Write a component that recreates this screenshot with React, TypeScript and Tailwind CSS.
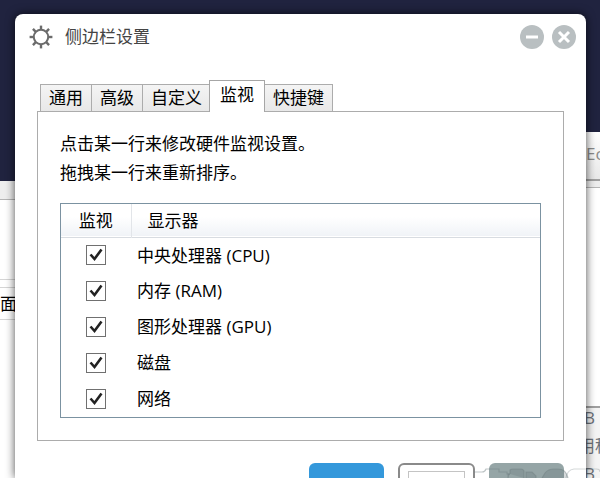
import { useState } from 'react'

const TABS = ['通用', '高级', '自定义', '监视', '快捷键']

const MONITORS = [
  { id: 'cpu', name: '中央处理器 (CPU)' },
  { id: 'ram', name: '内存 (RAM)' },
  { id: 'gpu', name: '图形处理器 (GPU)' },
  { id: 'disk', name: '磁盘' },
  { id: 'net', name: '网络' },
]

function GearIcon() {
  return (
    <svg className="w-6 h-6 shrink-0" viewBox="0 0 24 24" fill="none" stroke="#6b6b6b" strokeWidth="2">
      <circle cx="12" cy="12" r="7.2" />
      {[0, 45, 90, 135, 180, 225, 270, 315].map(a => (
        <path key={a} d="M12 0.6V5" strokeWidth="2.4" transform={`rotate(${a} 12 12)`} />
      ))}
    </svg>
  )
}

function TitleBar() {
  return (
    <header className="flex items-center justify-between h-6 mt-[11px] pl-3.5 pr-2.5">
      <div className="flex items-center gap-3">
        <GearIcon />
        <h1 className="text-[17px] leading-6 text-[#444444]">侧边栏设置</h1>
      </div>
      <div className="flex items-center gap-2">
        <button aria-label="最小化" className="w-6 h-6 rounded-full bg-[#b9bfc1]">
          <svg viewBox="0 0 24 24" stroke="#ffffff" strokeWidth="3">
            <path d="M6 12H18" />
          </svg>
        </button>
        <button aria-label="关闭" className="w-6 h-6 rounded-full bg-[#b9bfc1]">
          <svg viewBox="0 0 24 24" stroke="#ffffff" strokeWidth="3">
            <path d="M7 7L17 17M17 7L7 17" />
          </svg>
        </button>
      </div>
    </header>
  )
}

function MonitorTable() {
  const [checked, setChecked] = useState<Record<string, boolean>>({
    cpu: true, ram: true, gpu: true, disk: true, net: true,
  })

  return (
    <div className="mt-4 border border-[#7b92a1]">
      <table className="w-full table-fixed text-left">
        <thead>
          <tr className="h-[33px] bg-linear-to-b from-white from-40% to-[#f0f3f7] border-b border-[#d8dce1]">
            <th className="w-[70px] font-normal text-center border-r border-[#e2e5e9]">监视</th>
            <th className="font-normal pl-4">显示器</th>
          </tr>
        </thead>
        <tbody>
          {MONITORS.map(m => (
            <tr key={m.id} className="h-9">
              <td>
                <span className="grid place-items-center">
                  <input
                    id={m.id}
                    type="checkbox"
                    checked={checked[m.id]}
                    onChange={() => setChecked({ ...checked, [m.id]: !checked[m.id] })}
                    className="peer appearance-none col-start-1 row-start-1 w-5 h-5 border border-[#707070] bg-white"
                  />
                  <svg
                    className="col-start-1 row-start-1 w-5 h-5 pointer-events-none invisible peer-checked:visible"
                    viewBox="0 0 20 20" fill="none" stroke="#222222" strokeWidth="2.6"
                  >
                    <path d="M4.5 9.5L8.5 14L15.5 4.5" />
                  </svg>
                </span>
              </td>
              <td className="pl-1.5">
                <label htmlFor={m.id}>{m.name}</label>
              </td>
            </tr>
          ))}
        </tbody>
      </table>
    </div>
  )
}

// Faint outline logo that lies over the bottom right corner
function Watermark() {
  return (
    <svg
      className="absolute z-20 right-0 bottom-0 w-[126px] h-4 pointer-events-none"
      viewBox="0 0 126 16" fill="none" stroke="#6f7f80" strokeOpacity="0.45" strokeWidth="1.2"
    >
      <path d="M0 10H8Q11 10 12 7H25V10H33V12H36" />
      <path d="M36 12V8Q37 7 39 7H47Q49 7 50 9V16M36 12H34V16" fill="#5f7172" fillOpacity="0.25" />
      <path d="M52 16V10H58L62 14V16M68 16L71 11Q74 7 80 7H84Q92 7 94 16" fill="#5f7172" fillOpacity="0.25" />
      <path d="M92 16Q93 8 100 7H122Q126 7 126 10" strokeOpacity="0.3" />
    </svg>
  )
}

function SettingsDialog() {
  const [active, setActive] = useState('监视')

  return (
    <main className="relative z-10 flex-1 min-w-0 flex flex-col mt-3.5 rounded-t-lg bg-white shadow-[0_0_10px_rgba(0,0,0,0.7)]">
      <TitleBar />

      {/* Tabs */}
      <div role="tablist" className="relative flex items-end h-8 mt-[31px] ml-[25px]">
        {TABS.map(t => (
          <button
            key={t}
            role="tab"
            aria-selected={t === active}
            onClick={() => setActive(t)}
            className={
              t === active
                ? 'relative z-10 h-8 -mx-px px-2.5 pb-1 leading-6 bg-white border border-b-0 border-[#a6a6a6]'
                : 'h-7 px-2 -mr-px leading-6 bg-linear-to-b from-[#f4f4f4] to-[#e8e8e8] border border-[#acacac]'
            }
          >
            {t}
          </button>
        ))}
      </div>

      <section className="-mt-px mx-[22px] px-[22px] pt-[18px] pb-[22px] border border-[#acacac]">
        <p className="leading-7">点击某一行来修改硬件监视设置。</p>
        <p className="leading-[29px]">拖拽某一行来重新排序。</p>
        <MonitorTable />
      </section>

      {/* Dialog buttons */}
      <footer className="flex justify-end gap-3.5 mt-[22px] mr-[22px]">
        <button aria-label="保存" className="w-[75px] h-10 rounded-md bg-[#3498db]" />
        <button aria-label="应用" className="w-[77px] h-10 rounded-md border-2 border-[#8a8a8a] bg-white px-2 py-1.5">
          <span className="block h-full border border-[#c4c4c4]" />
        </button>
        <button aria-label="关闭设置" className="w-[75px] h-10 rounded-md bg-[#95a5a6]" />
      </footer>
    </main>
  )
}

export default function App() {
  return (
    <div className="relative flex h-screen overflow-hidden bg-[#20233f] font-['Open_Sans','Noto_Sans_CJK_SC',sans-serif] text-[17px] text-black">
      {/* Window behind, left edge */}
      <aside className="w-[15px] shrink-0 flex flex-col pt-[181px] overflow-hidden">
        <div className="h-[19px] shrink-0 bg-[#eeeeee] border-b border-[#b5b5b5]" />
        <div className="h-20 shrink-0 bg-white border-b border-[#d5d5d5]" />
        <div className="h-2 shrink-0 bg-white border-b border-[#d5d5d5]" />
        <div className="h-8 shrink-0 bg-white border-b border-[#d5d5d5] leading-8">面</div>
        <div className="flex-1 bg-white" />
      </aside>

      <SettingsDialog />

      {/* Windows behind, right edge */}
      <aside className="w-3.5 shrink-0 flex flex-col pt-[132px] overflow-hidden text-[#8a8a8a]">
        <div className="h-[49px] shrink-0 bg-linear-to-b from-white to-[#e8e8e8] border-b-2 border-[#a0a0a0] leading-[44px]">Ec</div>
        <div className="h-[7px] shrink-0 bg-[#ededed] border-b border-[#b5b5b5]" />
        <div className="h-[220px] shrink-0 bg-white border-b-2 border-[#a0a0a0]" />
        <div className="flex-1 bg-[#f4f4f4] text-[#6b7078] leading-7">
          <div className="-ml-2 -mt-1">
            <p className="pl-1.5">B</p>
            <p className="whitespace-nowrap">用程</p>
            <p className="pl-1.5">B</p>
          </div>
        </div>
      </aside>

      <Watermark />
    </div>
  )
}
